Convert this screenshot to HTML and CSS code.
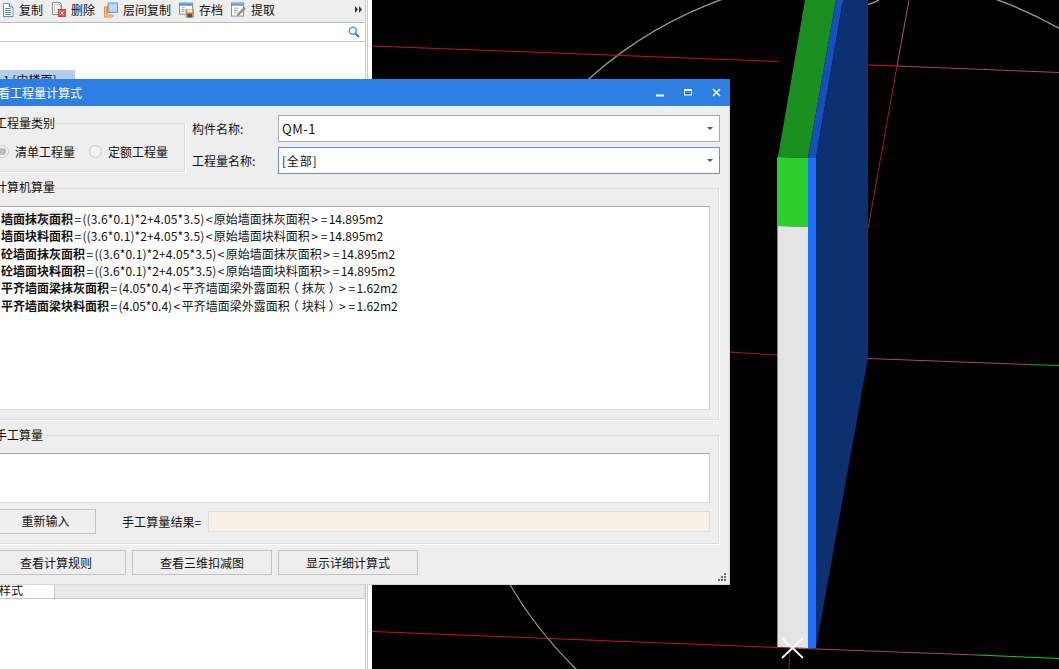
FILE: index.html
```html
<!DOCTYPE html>
<html lang="zh-CN">
  <head>
    <meta charset="UTF-8" />
    <title>查看工程量计算式</title>
    <link rel="stylesheet" href="styles.css">
  </head>

  <body>
    <div class="app">
      <div class="side">
        <div class="toolbar">
          <svg class="tool-icon first" width="12" height="14" viewBox="0 0 12 14"><path d="M1.500 .5h6l3.500 3.500v9.500h-9.500z" fill="#fff" stroke="#5b8fc4"/><path d="M3 5.500h6M3 7.500h6M3 9.500h6M3 11.500h6" stroke="#5b8fc4"/><path d="M7.500 .5v3.500h3.500" fill="#d5e5f5" stroke="#5b8fc4"/></svg>
          <span class="tool-label roomy">复制</span>
          <svg class="tool-icon" width="14" height="15" viewBox="0 0 14 15"><path d="M.5 .5h7l2 2v10h-9z" fill="#fff" stroke="#8a8a8a"/><path d="M2.500 2.500h5l1 1v7h-6z" fill="none" stroke="#c4c4c4"/><rect x="6.500" y="7.500" width="7" height="7" fill="#d85c5c" stroke="#c04848"/><path d="M8.500 9.500l3 3M11.500 9.500l-3 3" stroke="#fff"/></svg>
          <span class="tool-label roomy">删除</span>
          <svg class="tool-icon" width="14" height="16" viewBox="0 0 15 16"><path d="M.5 15.500v-11h2v9h7v2zM3.500 12.500v-9h1" fill="none" stroke="#ee8026"/><rect x="4.500" y=".5" width="10" height="10" fill="#b8d6f8" stroke="#5a8ed0"/></svg>
          <span class="tool-label">层间复制</span>
          <svg class="tool-icon" width="15" height="16" viewBox="0 0 16 16"><rect x=".5" y=".5" width="14" height="12" fill="#fff" stroke="#5c8fc8"/><rect x="1" y="1" width="13" height="2.500" fill="#5c8fc8"/><path d="M3 5.500h3M3 7.500h3M3 9.500h3" stroke="#8aa"/><rect x="7" y="7" width="9" height="9" fill="#f08a2c"/><rect x="9" y="7.500" width="5" height="3" fill="#fff"/><rect x="9" y="12" width="5" height="4" fill="#39557a"/></svg>
          <span class="tool-label">存档</span>
          <svg class="tool-icon" width="15" height="15" viewBox="0 0 16 15"><rect x=".5" y=".5" width="13" height="14" fill="#fff" stroke="#6a8eb8"/><rect x="1" y="1" width="12" height="2.500" fill="#6a9ed0"/><path d="M3 6h5M3 8.500h4M3 11h3" stroke="#999"/><path d="M7 12l7-7 1.500 1.500-7 7-2 .5z" fill="#8a9a8a" stroke="#667" stroke-width=".5"/></svg>
          <span class="tool-label">提取</span>
          <svg class="tool-more" width="7" height="7" viewBox="0 0 7 7"><path d="M0 0l3 3.500-3 3.500zM4 0l3 3.500-3 3.500z" fill="#333"/></svg>
        </div>
        <div class="search">
          <svg width="12" height="12" viewBox="0 0 12 12"><circle cx="4.800" cy="4.800" r="3.500" fill="none" stroke="#4f9bd8" stroke-width="1.500"/><path d="M7.500 7.500l3.500 3.500" stroke="#3c7fb8" stroke-width="2"/></svg>
        </div>
        <div class="tree">
          <div class="tree-row">1 [中楼面]</div>
        </div>
        <div class="tabs">
          <div class="tab">样式</div>
        </div>
      </div>
      <div class="gutter"></div>
      <svg class="canvas" viewBox="372 0 687 669">
        <circle cx="859" cy="380" r="404.500" fill="none" stroke="#9a9a9a" stroke-width="1.300"/>
        <path d="M839 0Q859 11 879 0" fill="none" stroke="#aaa" stroke-width="1.300"/>
        <path d="M372 46L778 61.500" stroke="#c81020"/>
        <path d="M868 65L897 66" stroke="#e01020"/>
        <path d="M897 66L1059 72.500" stroke="#a84a64"/>
        <path d="M729 352L778 355" stroke="#a81828"/>
        <path d="M868 358.500L1028 364.500" stroke="#a84a64"/>
        <path d="M1028 364.500L1059 365.500" stroke="#10b010"/>
        <path d="M372 631.500L790 648" stroke="#c81020"/>
        <path d="M790 648L977 655" stroke="#a84a64"/>
        <path d="M977 655L1059 658.500" stroke="#10d010"/>
        <path d="M909 0L897 66" stroke="#b05070"/>
        <path d="M897 66L868 229" stroke="#a01830"/>
        <path d="M790 648L789 669" stroke="#901020"/>
        <polygon points="805,0 836,0 808,158 778,157" fill="#1b8f20"/>
        <polygon points="836,0 843,0 816,158 808,158" fill="#1650c0"/>
        <polygon points="843,0 868,0 868,358 816,648 816,158" fill="#0e2f70"/>
        <polygon points="778,157 808,158 808,227 778,226" fill="#2bce2b"/>
        <polygon points="778,226 808,227 808,648 778,647" fill="#e4e4e4"/>
        <rect x="808" y="158" width="8" height="490" fill="#1f6fff"/>
        <path d="M777.500 157V647" stroke="#8a8a8a"/>
        <path d="M782 638L803 658M803 638L782 658" stroke="#fff" stroke-width="1.800"/>
      </svg>
    </div>

    <div class="dialog">
      <div class="titlebar">
        <span class="title-text">查看工程量计算式</span>
        <div class="win-btn"><svg width="9" height="9" viewBox="0 0 9 9"><rect x="0" y="6.500" width="8" height="2" fill="#fff"/></svg></div>
        <div class="win-btn"><svg width="9" height="9" viewBox="0 0 9 9"><rect x=".5" y="1.500" width="7" height="5.500" fill="none" stroke="#fff"/><rect x="0" y="1" width="8" height="2" fill="#fff"/></svg></div>
        <div class="win-btn"><svg width="9" height="9" viewBox="0 0 9 9"><path d="M1 1l7 7M8 1l-7 7" stroke="#fff" stroke-width="1.500"/></svg></div>
      </div>

      <div class="dialog-body">
        <div class="top-row">
          <div class="group kind-group">
            <div class="group-title">工程量类别</div>
            <div class="radios">
              <span class="radio checked"></span>
              <span class="radio-label">清单工程量</span>
              <span class="radio"></span>
              <span class="radio-label">定额工程量</span>
            </div>
          </div>
          <div class="fields">
            <div class="field">
              <span class="field-label">构件名称:</span>
              <div class="select"><span>QM-1</span><i class="arrow"></i></div>
            </div>
            <div class="field">
              <span class="field-label">工程量名称:</span>
              <div class="select focused"><span>[全部]</span><i class="arrow"></i></div>
            </div>
          </div>
        </div>

        <div class="group calc-group">
          <div class="group-title">计算机算量</div>
          <div class="calc-box">
            <p class="calc-line"><b class="current">墙面抹灰面积</b><span class="op">=</span><span class="formula">((3.6*0.1)*2+4.05*3.5)</span><span class="op">&lt;</span>原始墙面抹灰面积<span class="op">&gt;</span><span class="op">=</span>14.895m2</p>
            <p class="calc-line"><b>墙面块料面积</b><span class="op">=</span><span class="formula">((3.6*0.1)*2+4.05*3.5)</span><span class="op">&lt;</span>原始墙面块料面积<span class="op">&gt;</span><span class="op">=</span>14.895m2</p>
            <p class="calc-line"><b>砼墙面抹灰面积</b><span class="op">=</span><span class="formula">((3.6*0.1)*2+4.05*3.5)</span><span class="op">&lt;</span>原始墙面抹灰面积<span class="op">&gt;</span><span class="op">=</span>14.895m2</p>
            <p class="calc-line"><b>砼墙面块料面积</b><span class="op">=</span><span class="formula">((3.6*0.1)*2+4.05*3.5)</span><span class="op">&lt;</span>原始墙面块料面积<span class="op">&gt;</span><span class="op">=</span>14.895m2</p>
            <p class="calc-line"><b>平齐墙面梁抹灰面积</b><span class="op">=</span>(4.05*0.4)<span class="op">&lt;</span>平齐墙面梁外露面积<span class="lp">（</span>抹灰<span class="rp">）</span><span class="op">&gt;</span><span class="op">=</span>1.62m2</p>
            <p class="calc-line"><b>平齐墙面梁块料面积</b><span class="op">=</span>(4.05*0.4)<span class="op">&lt;</span>平齐墙面梁外露面积<span class="lp">（</span>块料<span class="rp">）</span><span class="op">&gt;</span><span class="op">=</span>1.62m2</p>
          </div>
        </div>

        <div class="group manual-group">
          <div class="group-title">手工算量</div>
          <div class="manual-box"></div>
          <div class="manual-row">
            <button class="btn reenter">重新输入</button>
            <span class="result-label">手工算量结果=</span>
            <div class="result"></div>
          </div>
        </div>

        <div class="actions">
          <button class="btn">查看计算规则</button>
          <button class="btn">查看三维扣减图</button>
          <button class="btn">显示详细计算式</button>
        </div>
      </div>

      <svg class="grip" width="8" height="8" viewBox="0 0 8 8"><path d="M6 0h2v2h-2zM3 3h2v2h-2zM6 3h2v2h-2zM0 6h2v2h-2zM3 6h2v2h-2zM6 6h2v2h-2z" fill="#6f6f6f"/></svg>
    </div>
  </body>
</html>
```

FILE: styles.css
```css
* {
  margin: 0;
  padding: 0;
  box-sizing: border-box;
  font-family: 'Noto Sans CJK SC', 'Noto Sans', sans-serif;
}

body {
  height: 669px;
  overflow: hidden;
  background: #fff;
  color: #111;
  font-size: 12px;
}

.app {
  display: flex;
  height: 669px;
}

.side {
  width: 366px;
  display: flex;
  flex-direction: column;
  border-right: 1px solid #c8c8c8;
}

.gutter {
  width: 5px;
  border-left: 1px solid #c8c8c8;
  margin-left: 1px;
  background: #fff;
}

.canvas {
  display: block;
  width: 687px;
  height: 669px;
  background: #000;
}

.toolbar {
  height: 23px;
  display: flex;
  align-items: center;
  background: #eee;
  border-bottom: 1px solid #bbb;
  padding-bottom: 3px;
}

.tool-icon {
  margin-left: 8px;
}

.tool-icon.first {
  margin-left: 2px;
}

.tool-label {
  margin-left: 5px;
}

.tool-label.roomy {
  margin-right: 1px;
}

.tool-more {
  margin-left: auto;
  margin-right: 3px;
}

.search {
  height: 19px;
  display: flex;
  align-items: center;
  justify-content: flex-end;
  padding-right: 5px;
  border-bottom: 1px solid #c4c4c4;
}

.tree {
  flex: 1;
  padding-top: 28px;
}

.tree-row {
  width: 75px;
  height: 20px;
  line-height: 20px;
  padding-left: 3px;
  background: #b3cdeb;
}

.tabs {
  height: 24px;
  margin-bottom: 70px;
  display: flex;
  background: #e9e9e9;
  border-bottom: 1px solid #c8c8c8;
  border-right: 1px solid #ddd;
}

.tab {
  width: 55px;
  background: #fff;
  border-right: 1px solid #ccc;
  line-height: 30px;
  overflow: hidden;
  text-indent: -1px;
}

.dialog {
  position: absolute;
  left: -22px;
  top: 79px;
  width: 752px;
  height: 506px;
  background: #eee;
  border-right: 1px solid #d4d8de;
  border-bottom: 1px solid #d4d8de;
}

.titlebar {
  height: 27px;
  display: flex;
  align-items: center;
  background: #2e7fe3;
  color: #fff;
  margin-right: -1px;
}

.title-text {
  flex: 1;
  padding-left: 8px;
}

.win-btn {
  width: 28px;
  display: flex;
  justify-content: center;
}

.dialog-body {
  padding: 9px 9px 0 8px;
}

.top-row {
  display: flex;
  align-items: flex-start;
  height: 58px;
  margin-bottom: 15px;
}

.group {
  border: 1px solid #dcdcdc;
  box-shadow: 1px 1px 0 #fff;
}

.group-title {
  width: fit-content;
  height: 16px;
  line-height: 16px;
  margin: -9px 0 0 8px;
  background: #eee;
}

.kind-group {
  width: 199px;
  height: 49px;
  margin-top: 8px;
}

.radios {
  display: flex;
  align-items: center;
  padding-left: 9px;
  margin-top: 12px;
}

.radio {
  width: 13px;
  height: 13px;
  border: 1px solid #ccc;
  border-radius: 50%;
  background: #f2f2f2;
}

.radio.checked {
  background: radial-gradient(circle, #bbb 0, #bbb 3.500px, #f2f2f2 4px);
}

.radio-label {
  margin-left: 6px;
  margin-right: 14px;
}

.fields {
  margin-left: 7px;
  display: flex;
  flex-direction: column;
  gap: 5px;
}

.field {
  display: flex;
  align-items: center;
}

.field-label {
  width: 86px;
  padding-bottom: 1px;
}

.select {
  width: 442px;
  height: 27px;
  display: flex;
  align-items: center;
  justify-content: space-between;
  padding: 0 6px 1px 3px;
  background: #fff;
  border: 1px solid #aaa;
  font-size: 13px;
  letter-spacing: .5px;
}

.select.focused {
  border-color: #6a94d4;
  font-size: 12px;
  letter-spacing: .8px;
}

.arrow {
  width: 0;
  height: 0;
  border-left: 3px solid transparent;
  border-right: 3px solid transparent;
  border-top: 3px solid #555;
}

.calc-group {
  width: 733px;
  height: 232px;
  padding-right: 8px;
  margin-bottom: 15px;
}

.calc-group .group-title {
  margin-top: -10px;
}

.calc-box {
  height: 204px;
  margin: 11px 0 0 8px;
  padding: 3px 0 0 6px;
  background: #fff;
  border-top: 1px solid #aaa;
  border-right: 1px solid #ccc;
  border-bottom: 1px solid #ddd;
}

.calc-line {
  height: 17.330px;
  line-height: 17.330px;
  white-space: nowrap;
}

.calc-line .current {
  background: #eee;
}

.op {
  padding: 0 1.400px;
}

.formula {
  letter-spacing: .1px;
}

.lp {
  margin: 0 3px 0 -3px;
}

.rp {
  margin: 0 -3px 0 3px;
}

.manual-group {
  width: 733px;
  height: 109px;
  padding-right: 8px;
}

.manual-box {
  height: 50px;
  margin: 10px 0 0 8px;
  background: #fff;
  border-top: 1px solid #aaa;
  border-right: 1px solid #ccc;
  border-bottom: 1px solid #ddd;
}

.manual-row {
  display: flex;
  align-items: center;
  height: 25px;
  margin: 6px 0 0 8px;
}

.btn {
  width: 140px;
  height: 25px;
  background: #eee;
  border: 1px solid #c4c4c4;
  color: #111;
  font-size: 12px;
}

.btn.reenter {
  width: 101px;
  padding-bottom: 2px;
}

.result-label {
  width: 80px;
  margin-left: 26px;
  letter-spacing: .1px;
}

.result {
  flex: 1;
  height: 21px;
  margin-left: 6px;
  background: #f8efe6;
  border: 1px solid #ddd;
}

.actions {
  display: flex;
  gap: 6px;
  margin-top: 6px;
}

.grip {
  position: absolute;
  right: 3px;
  bottom: 3px;
}
```
